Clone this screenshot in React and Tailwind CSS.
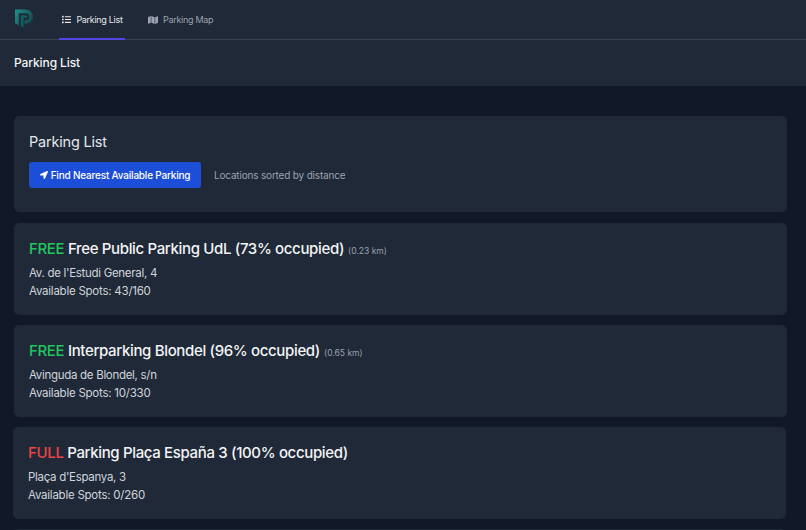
import React from "react";
import { FaList, FaMap, FaLocationArrow } from "react-icons/fa";

const font = "font-['Inter','Noto_Sans',sans-serif]";

function Card({ status, color, name, km, address, spots, shift }) {
  return (
    <div className={`mb-[10px] rounded-[5px] bg-[#1f2937] px-[15px] pt-[14px] h-[92px] shrink-0 ${shift ? "-ml-px mr-px" : ""}`}>
      <h3 className="text-[15px] leading-[24px] font-medium tracking-[-0.35px] text-[#f3f4f6] whitespace-nowrap">
        <span className={color}>{status}</span> {name}
        {km && <span className="ml-[4px] text-[8.500px] leading-none tracking-normal font-normal text-[#9ca3af]">({km})</span>}
      </h3>
      <p className="mt-[3px] text-[11.500px] leading-[18px] tracking-[-0.3px] text-[#d1d5db]">{address}</p>
      <p className="text-[11.500px] leading-[18px] tracking-[-0.24px] text-[#d1d5db]">Available Spots: {spots}</p>
    </div>
  );
}

export default function App() {
  return (
    <div className={`${font} h-screen overflow-hidden bg-[#111827] flex flex-col`}>
      <nav className="h-[40px] shrink-0 bg-[#1f2937] border-b border-[#374151] flex pl-[15px] pr-[14px]">
        <svg className="mt-[9px] h-[19px] w-[18px] shrink-0" viewBox="0 0 19 19">
          <defs>
            <linearGradient id="g" x1="0" y1="0" x2="1" y2="0.6">
              <stop offset="0" stopColor="#23908f" />
              <stop offset="1" stopColor="#124a50" />
            </linearGradient>
          </defs>
          <path d="M0 0H11C16 0 19 3.500 19 7.500C19 12 16 15 11 15H10V11.500H11C13.500 11.500 15 10 15 7.500C15 5.500 13.500 4 11 4H4V17L0 14.500Z" fill="url(#g)" />
          <path d="M6 6H11C12.500 6 13 6.800 13 7.500C13 8.500 12.500 9 11 9H9V19L6 17.500Z" fill="#125c62" />
        </svg>
        <a className="ml-[26px] h-[40px] w-[66px] border-b-2 border-[#4f46e5] flex items-center justify-center gap-[5px] pl-[1px] pt-[1px] text-[9px] tracking-[-0.3px] text-[#e5e7eb] whitespace-nowrap">
          <FaList size={9} />
          <span>Parking List</span>
        </a>
        <a className="ml-[23px] h-[39px] flex items-center gap-[5px] text-[9px] tracking-[-0.3px] text-[#9ca3af] whitespace-nowrap">
          <FaMap size={10} />
          <span>Parking Map</span>
        </a>
      </nav>
      <header className="h-[46px] shrink-0 bg-[#1f2937] px-[14px] flex items-center">
        <h1 className="text-[12px] font-medium tracking-[-0.1px] text-[#f3f4f6]">Parking List</h1>
      </header>
      <main className="pt-[30px] px-[14px] pr-[19px] flex flex-col">
        <section className="mb-[11px] h-[96px] shrink-0 rounded-[5px] bg-[#1f2937] px-[15px] pt-[16px]">
          <h2 className="text-[14.500px] leading-[20px] font-normal tracking-[-0.2px] text-[#e5e7eb]">Parking List</h2>
          <div className="mt-[10px] flex items-center">
            <button className="h-[26px] w-[172px] rounded-[3px] bg-[#1d4ed8] text-white text-[10px] tracking-[-0.2px] font-medium flex items-center justify-center gap-[3px] whitespace-nowrap">
              <FaLocationArrow size={8} />
              <span>Find Nearest Available Parking</span>
            </button>
            <span className="ml-[13px] text-[10px] tracking-[-0.18px] text-[#9ca3af]">Locations sorted by distance</span>
          </div>
        </section>
        <Card status="FREE" color="text-[#22c55e]" name="Free Public Parking UdL (73% occupied)" km="0.23 km" address="Av. de l'Estudi General, 4" spots="43/160" />
        <Card status="FREE" color="text-[#22c55e]" name="Interparking Blondel (96% occupied)" km="0.65 km" address="Avinguda de Blondel, s/n" spots="10/330" />
        <Card shift status="FULL" color="text-[#ef4444]" name="Parking Plaça España 3 (100% occupied)" address="Plaça d'Espanya, 3" spots="0/260" />
        <div className="h-[92px] shrink-0 rounded-[5px] bg-[#1f2937] -ml-px mr-px" />
      </main>
    </div>
  );
}
